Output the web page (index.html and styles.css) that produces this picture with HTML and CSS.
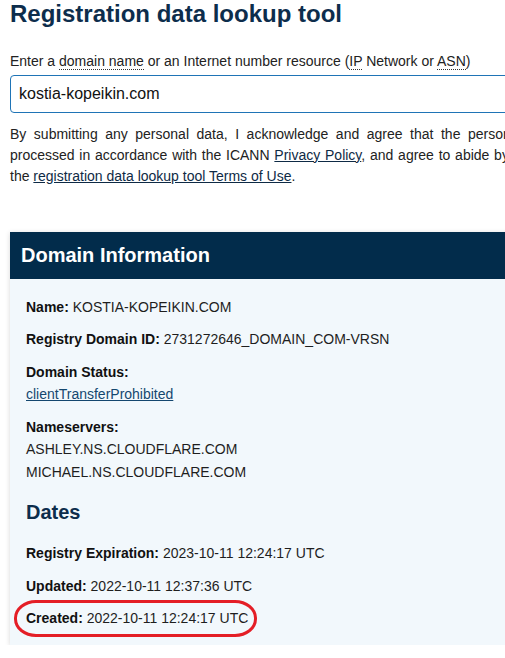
FILE: index.html
```html
<!DOCTYPE html>
<html lang="en">
<head>
<meta charset="utf-8">
<title>Registration data lookup tool</title>
<link rel="stylesheet" href="styles.css">
</head>
<body>
<main class="page">
  <h1 class="title">Registration data lookup tool</h1>
  <label class="field-label" for="q">Enter a <abbr title="domain name">domain name</abbr> or an Internet number resource (<abbr title="Internet Protocol">IP</abbr> Network or <abbr title="Autonomous System Number">ASN</abbr>)</label>
  <input class="search" id="q" type="text" value="kostia-kopeikin.com">
  <p class="consent">By submitting any personal data, I acknowledge and agree that the personal data submitted by me will be processed in accordance with the ICANN <a href="#">Privacy Policy</a>, and agree to abide by the website <a href="#">Terms of Service</a> and the <a href="#">registration data lookup tool Terms of Use</a>.</p>

  <section class="card">
    <h2 class="card-head">Domain Information</h2>
    <div class="card-body">
      <p class="row"><b>Name:</b> KOSTIA-KOPEIKIN.COM</p>
      <p class="row"><b>Registry Domain ID:</b> 2731272646_DOMAIN_COM-VRSN</p>
      <p class="row"><b>Domain Status:</b><br><a class="status" href="#">clientTransferProhibited</a></p>
      <p class="row"><b>Nameservers:</b><br>ASHLEY.NS.CLOUDFLARE.COM<br>MICHAEL.NS.CLOUDFLARE.COM</p>
      <h3 class="sub-head">Dates</h3>
      <p class="row"><b>Registry Expiration:</b> 2023-10-11 12:24:17 UTC</p>
      <p class="row"><b>Updated:</b> 2022-10-11 12:37:36 UTC</p>
      <p class="row row-last"><b>Created:</b> 2022-10-11 12:24:17 UTC<span class="mark"></span></p>
    </div>
  </section>
</main>
</body>
</html>
```
FILE: styles.css
```css
html, body {
  overflow: hidden;
}
body {
  margin: 0;
  background: #ffffff;
  font-family: "Liberation Sans", Arial, sans-serif;
  color: #1e1e1e;
}
.page {
  width: 714px;
  padding: 0 10px;
}
.title {
  margin: 0 0 23px;
  font-size: 24px;
  line-height: 27.6px;
  font-weight: bold;
  color: #0d2d4c;
}
.field-label {
  display: block;
  font-size: 14px;
  line-height: 21px;
  color: #222;
}
abbr {
  text-decoration: none;
  border-bottom: 1px dotted #333;
}
.search {
  display: block;
  box-sizing: border-box;
  width: 100%;
  height: 38px;
  margin: 3px 0 0;
  padding: 0 8px;
  border: 1px solid #1f74b6;
  border-radius: 4px;
  font-family: "Liberation Sans", Arial, sans-serif;
  font-size: 16px;
  color: #111;
  outline: none;
}
.consent {
  margin: 11px 0 0;
  font-size: 14px;
  line-height: 21px;
  text-align: justify;
  color: #222;
}
.consent a {
  color: #0e2a45;
  text-decoration: underline;
}
.card {
  margin-top: 45px;
  background: #f2f8fc;
  box-shadow: 0 1px 5px rgba(0, 0, 0, 0.16);
}
.card-head {
  margin: 0;
  padding: 12px 11px;
  background: #022c4b;
  color: #ffffff;
  font-size: 20px;
  line-height: 23px;
  font-weight: bold;
}
.card-body {
  padding: 17px 16px 15px;
}
.row {
  position: relative;
  margin: 0 0 10px;
  font-size: 14px;
  line-height: 22.5px;
  color: #1e1e1e;
}
.row b {
  color: #111;
}
.row-last {
  margin-bottom: 0;
}
.status {
  color: #14476f;
  text-decoration: underline;
}
.sub-head {
  margin: 17px 0 18px;
  font-size: 20px;
  line-height: 24px;
  font-weight: bold;
  color: #0d2d4c;
}
.mark {
  position: absolute;
  left: -12px;
  top: -7px;
  width: 243px;
  height: 37px;
  box-sizing: border-box;
  border: 3px solid #e41e26;
  border-radius: 22px / 18px;
}
```
